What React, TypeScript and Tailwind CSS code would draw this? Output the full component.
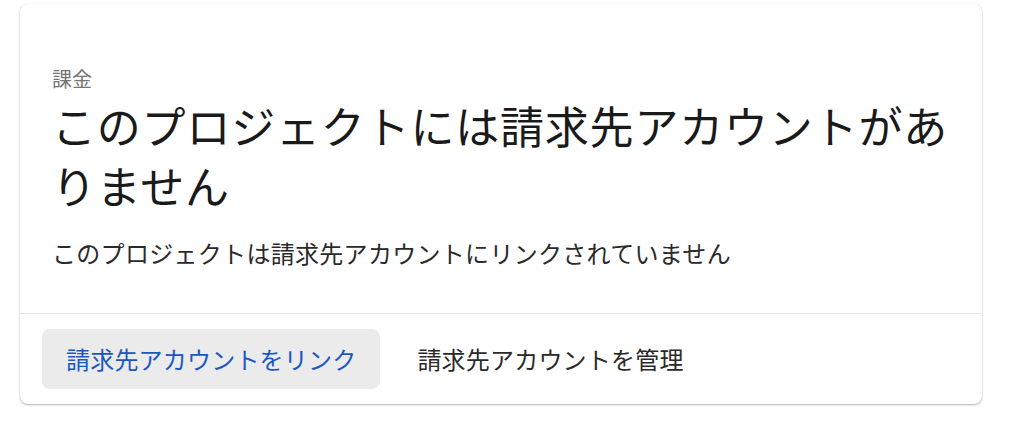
export default function App() {
  return (
    <div
      className="min-h-screen bg-white pt-[4px] px-[20px] pr-[42px]"
      style={{ fontFamily: '"Noto Sans CJK JP", "Noto Sans", sans-serif' }}
    >
      <div className="rounded-[8px] bg-white shadow-[0_1px_2px_rgba(0,0,0,0.3),0_0_1px_rgba(0,0,0,0.12)]">
        {/* Body */}
        <div className="px-[32px] pt-[60px] pb-[42px]">
          <div className="text-[20px] leading-[29px] text-[#757575]">課金</div>
          <h1 className="mt-[2px] text-[44px] leading-[60px] tracking-[0.8px] text-[#1a1a1a] font-normal">
            このプロジェクトには請求先アカウントがありません
          </h1>
          <p className="mt-[20px] text-[24px] leading-[36px] tracking-[0.3px] text-[#2a2a2a]">
            このプロジェクトは請求先アカウントにリンクされていません
          </p>
        </div>

        <div className="border-t border-[#e6e6e6]" />

        {/* Actions */}
        <div className="flex items-center gap-[13px] px-[22px] pt-[15px] pb-[15px]">
          <button className="h-[60px] rounded-[8px] bg-[#ebebeb] px-[24px] text-[24px] tracking-[0.2px] text-[#1a57c2]">
            請求先アカウントをリンク
          </button>
          <button className="h-[60px] rounded-[8px] px-[24px] text-[24px] tracking-[0.2px] text-[#2a2a2a]">
            請求先アカウントを管理
          </button>
        </div>
      </div>
    </div>
  )
}
